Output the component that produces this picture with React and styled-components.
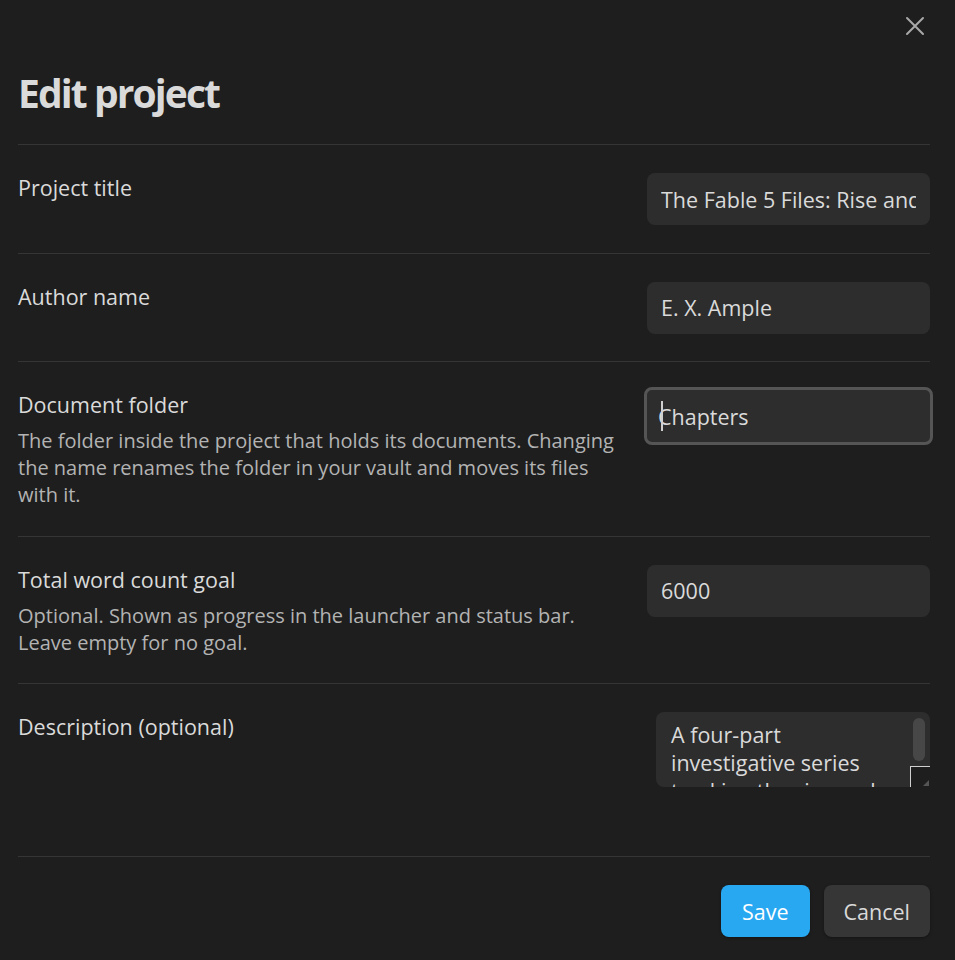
import React from 'react';
import styled, { createGlobalStyle } from 'styled-components';

const GlobalStyle = createGlobalStyle`
	html, body {
		margin: 0;
		padding: 0;
		background: #1e1e1e;
	}
	* {
		box-sizing: border-box;
	}
`;

const Modal = styled.div`
	position: relative;
	width: 955px;
	height: 960px;
	padding: 0 25px 0 18px;
	background: #1e1e1e;
	color: #dadada;
	font-family: "Open Sans", "Noto Sans", sans-serif;
	overflow: hidden;
`;

const CloseButton = styled.button`
	position: absolute;
	top: 12px;
	right: 26px;
	width: 28px;
	height: 28px;
	padding: 0;
	border: none;
	background: none;
	color: #a8a8a8;
	display: flex;
	align-items: center;
	justify-content: center;
`;

const Title = styled.h1`
	margin: 0;
	padding: 69px 0 27px;
	font-size: 39px;
	line-height: 48px;
	letter-spacing: -1.9px;
	font-weight: 700;
	color: #dadada;
`;

const Row = styled.div`
	display: flex;
	justify-content: space-between;
	align-items: flex-start;
	gap: 30px;
	border-top: 1px solid #353535;
	padding: 28px 0 ${p => p.$bottom || 27.5}px;
`;

const Info = styled.div`
	flex: 1;
	max-width: 596px;
`;

const Label = styled.div`
	font-size: 21.5px;
	line-height: 30px;
	color: #dadada;
`;

const Description = styled.div`
	margin-top: 7px;
	font-size: 20px;
	line-height: 27px;
	color: #b3b3b3;
`;

const Field = styled.div`
	position: relative;
	width: 283px;
	height: 52px;
	flex-shrink: 0;
`;

const TextInput = styled.input`
	width: ${p => (p.$focused ? 289 : 283)}px;
	height: ${p => (p.$focused ? 58 : 52)}px;
	margin: ${p => (p.$focused ? '-3px -3px 0 -3px' : '0')};
	padding: 0 ${p => (p.$focused ? 11 : 14)}px;
	border-radius: 8px;
	background: #2d2d2d;
	border: ${p => (p.$focused ? '3px solid #555555' : 'none')};
	outline: none;
	font-family: inherit;
	font-size: 21.5px;
	color: #dadada;
`;

const Caret = styled.span`
	position: absolute;
	top: 11px;
	left: 14px;
	width: 2px;
	height: 30px;
	background: #cfcfcf;
`;

const TextArea = styled.div`
	position: relative;
	width: 274px;
	height: 75px;
	flex-shrink: 0;
	padding: 9px 26px 0 15px;
	border-radius: 8px 8px 0 8px;
	background: #2d2d2d;
	font-size: 21.5px;
	line-height: 28px;
	color: #dadada;
	overflow: hidden;
`;

const ScrollThumb = styled.div`
	position: absolute;
	top: 6px;
	right: 5px;
	width: 12px;
	height: 43px;
	border-radius: 6px;
	background: #474747;
`;

const Resizer = styled.div`
	position: absolute;
	right: 0;
	bottom: 0;
	width: 20px;
	height: 21px;
	border-top: 1px solid #d0d0d0;
	border-left: 1px solid #d0d0d0;
	background: #1e1e1e;
	display: flex;
	align-items: flex-end;
	justify-content: flex-end;
`;

const Footer = styled.div`
	display: flex;
	justify-content: flex-end;
	gap: 14px;
	border-top: 1px solid #353535;
	padding-top: 28px;
`;

const Button = styled.button`
	height: 52px;
	padding: 0 ${p => (p.$primary ? 21 : 20)}px;
	border: none;
	border-radius: 8px;
	font-family: inherit;
	font-size: 21.5px;
	background: ${p => (p.$primary ? '#29a8f2' : '#363636')};
	color: ${p => (p.$primary ? '#ffffff' : '#dadada')};
	box-shadow: 0 1px 3px rgba(0, 0, 0, 0.35);
`;

const XIcon = () => (
	<svg width="20" height="20" viewBox="0 0 20 20" fill="none" stroke="currentColor" strokeWidth="2" strokeLinecap="round">
		<path d="M2 2 L18 18 M18 2 L2 18" />
	</svg>
);

const fields = [
	{ label: 'Project title', value: 'The Fable 5 Files: Rise and Fall' },
	{ label: 'Author name', value: 'E. X. Ample' },
	{
		label: 'Document folder',
		value: 'Chapters',
		focused: true,
		desc: 'The folder inside the project that holds its documents. Changing the name renames the folder in your vault and moves its files with it.',
	},
	{
		label: 'Total word count goal',
		value: '6000',
		desc: 'Optional. Shown as progress in the launcher and status bar. Leave empty for no goal.',
	},
];

const App = () => {
	return (
		<Modal>
			<GlobalStyle />
			<CloseButton aria-label="Close">
				<XIcon />
			</CloseButton>
			<Title>Edit project</Title>
			{fields.map(f => (
				<Row key={f.label}>
					<Info>
						<Label>{f.label}</Label>
						{f.desc && <Description>{f.desc}</Description>}
					</Info>
					<Field>
						<TextInput type="text" readOnly value={f.value} $focused={f.focused} />
						{f.focused && <Caret />}
					</Field>
				</Row>
			))}
			<Row $bottom={69}>
				<Info>
					<Label>Description (optional)</Label>
				</Info>
				<TextArea>
					A four-part investigative series tracking the rise and fall of a fictional studio.
					<ScrollThumb />
					<Resizer>
						<svg width="10" height="10" viewBox="0 0 10 10">
							<path d="M9 3 L9 9 L3 9 Z" fill="#555" />
						</svg>
					</Resizer>
				</TextArea>
			</Row>
			<Footer>
				<Button $primary>Save</Button>
				<Button>Cancel</Button>
			</Footer>
		</Modal>
	);
};

export default App;
